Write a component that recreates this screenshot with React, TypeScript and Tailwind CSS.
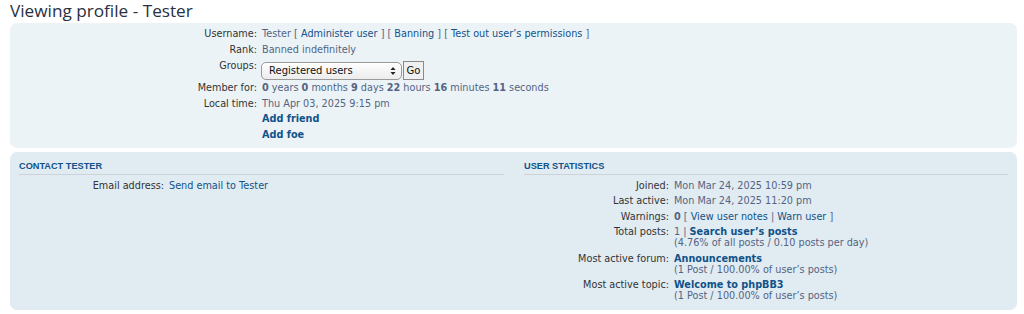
import React from "react";

const label = "text-right text-[#333333] shrink-0";
const value = "text-[#536482]";
const link = "text-[#105289]";

function Row({ dt, w, children }: { dt: string; w: string; children: React.ReactNode }) {
    return (
        <div className="flex gap-[5px] mb-[4.6px] leading-[11px]">
            <div className={`${label} ${w}`}>{dt}</div>
            <div className={value}>{children}</div>
        </div>
    );
}

function SelectBox() {
    return (
        <div className="flex items-center gap-[1px]">
            <div className="w-[141px] h-[18px] rounded-[5px] border border-[#9a9a9a] bg-gradient-to-b from-white to-[#ececec] flex items-center justify-between pl-[7px] pr-[5px] text-[#111] text-[10px]">
                <span>Registered users</span>
                <svg width="6" height="10" viewBox="0 0 6 10">
                    <path d="M3 1 L5.5 4 L0.5 4 Z" fill="#222" />
                    <path d="M3 9 L5.5 6 L0.5 6 Z" fill="#222" />
                </svg>
            </div>
            <div className="h-[19px] w-[21px] border border-[#8a8a8a] bg-[#f0f0f0] flex items-center justify-center text-[#111] text-[10px]">
                Go
            </div>
        </div>
    );
}

export default function App() {
    return (
        <div className="w-[1024px] h-[314px] bg-white font-['DejaVu_Sans',sans-serif] text-[9.7px] overflow-hidden">
            <h2 className="h-[23px] pt-[1px] pl-[10px] font-['Open_Sans',sans-serif] text-[17.2px] leading-[20px] text-[#28313f]">
                Viewing profile - Tester
            </h2>

            {/* profile panel */}
            <div className="ml-[10px] w-[1007px] h-[125px] rounded-[7px] bg-[#ecf3f7] pt-[5px] pl-[9px]">
                <Row dt="Username:" w="w-[238px]">
                    Tester <span>[ </span>
                    <span className={link}>Administer user</span> ] [ <span className={link}>Banning</span> ] [{" "}
                    <span className={link}>Test out user’s permissions</span> ]
                </Row>
                <Row dt="Rank:" w="w-[238px]">Banned indefinitely</Row>
                <div className="flex gap-[4px] leading-[11px] h-[22.8px]">
                    <div className={`${label} w-[238px] pt-[0.5px]`}>Groups:</div>
                    <SelectBox />
                </div>
                <Row dt="Member for:" w="w-[238px]">
                    <b>0</b> years <b>0</b> months <b>9</b> days <b>22</b> hours <b>16</b> minutes <b>11</b> seconds
                </Row>
                <Row dt="Local time:" w="w-[238px]">Thu Apr 03, 2025 9:15 pm</Row>
                <Row dt="" w="w-[238px]">
                    <b className={link}>Add friend</b>
                </Row>
                <Row dt="" w="w-[238px]">
                    <b className={link}>Add foe</b>
                </Row>
            </div>

            {/* contact + statistics */}
            <div className="ml-[10px] mt-[4px] w-[1007px] h-[158px] rounded-[7px] bg-[#e1ebf2] pt-[9px] pl-[9px] flex gap-[20px]">
                <div className="w-[485px]">
                    <h3 className="font-['Liberation_Sans',sans-serif] font-bold text-[9.2px] uppercase text-[#105289] leading-[11px] pb-[2px] border-b border-[#cdd3d9] mb-[4.5px]">
                        Contact Tester
                    </h3>
                    <Row dt="Email address:" w="w-[145px]">
                        <span className={link}>Send email to Tester</span>
                    </Row>
                </div>
                <div className="w-[484px]">
                    <h3 className="font-['Liberation_Sans',sans-serif] font-bold text-[9.2px] uppercase text-[#105289] leading-[11px] pb-[2px] border-b border-[#cdd3d9] mb-[4.5px]">
                        User statistics
                    </h3>
                    <Row dt="Joined:" w="w-[145px]">Mon Mar 24, 2025 10:59 pm</Row>
                    <Row dt="Last active:" w="w-[145px]">Mon Mar 24, 2025 11:20 pm</Row>
                    <Row dt="Warnings:" w="w-[145px]">
                        <b>0</b> [ <span className={link}>View user notes</span> | <span className={link}>Warn user</span> ]
                    </Row>
                    <Row dt="Total posts:" w="w-[145px]">
                        1 | <b className={link}>Search user’s posts</b>
                        <br />
                        (4.76% of all posts / 0.10 posts per day)
                    </Row>
                    <Row dt="Most active forum:" w="w-[145px]">
                        <b className={link}>Announcements</b>
                        <br />
                        (1 Post / 100.00% of user’s posts)
                    </Row>
                    <Row dt="Most active topic:" w="w-[145px]">
                        <b className={link}>Welcome to phpBB3</b>
                        <br />
                        (1 Post / 100.00% of user’s posts)
                    </Row>
                </div>
            </div>
        </div>
    );
}
